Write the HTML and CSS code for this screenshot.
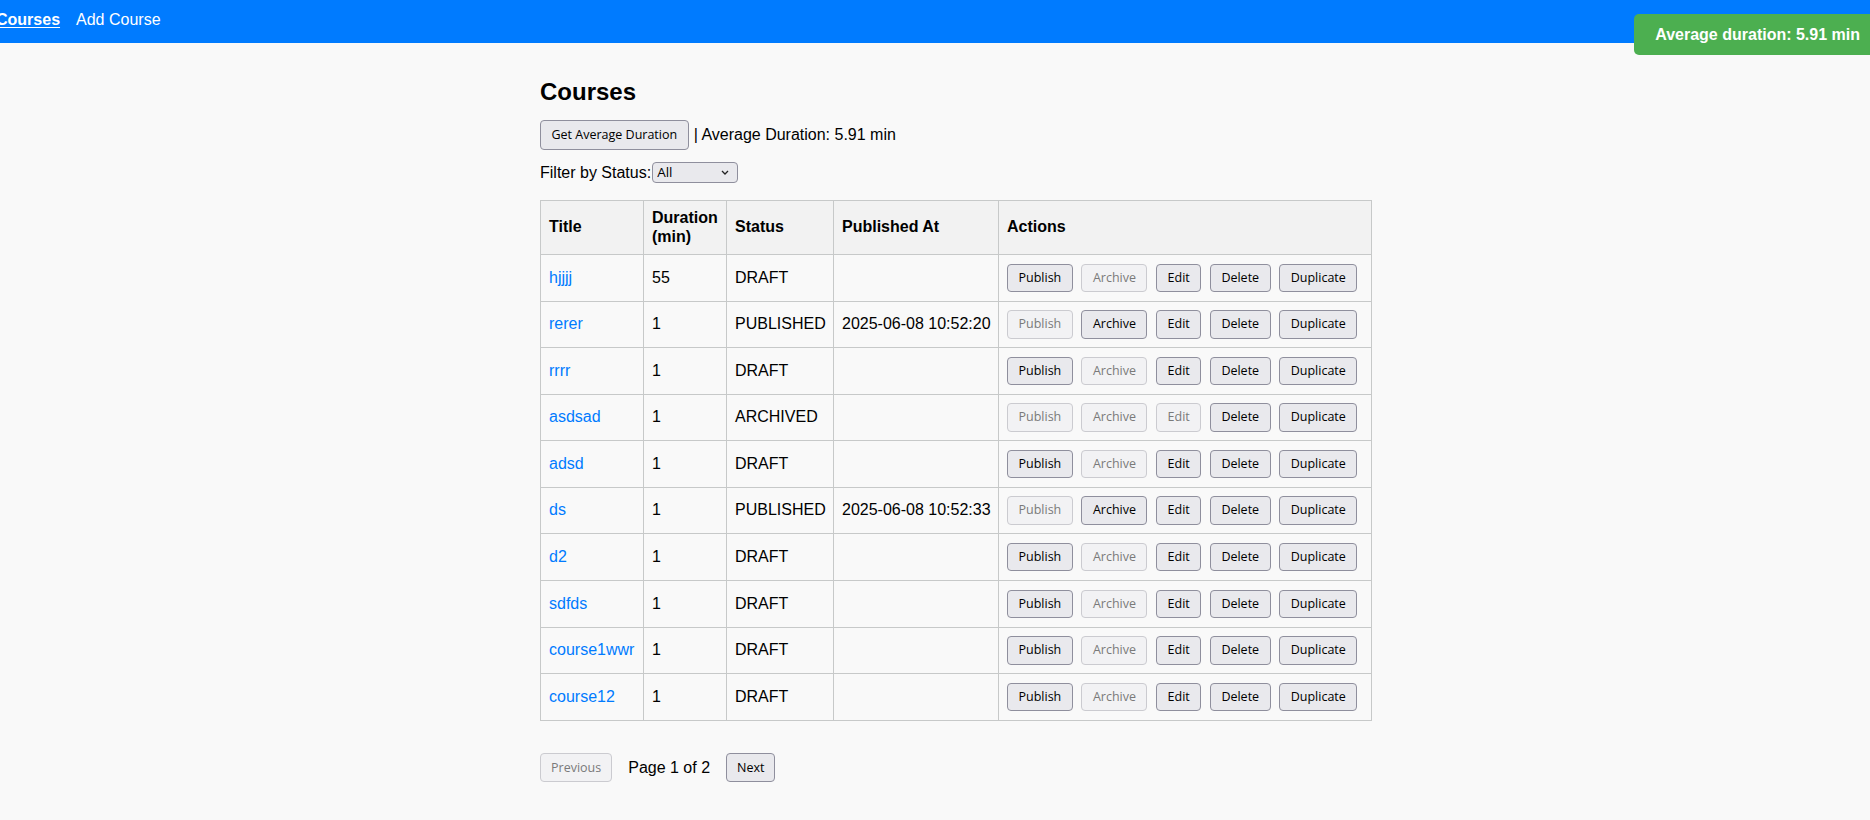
FILE: index.html
```html
<!DOCTYPE html>
<html lang="en">
<head>
<meta charset="utf-8">
<title>Courses</title>
<link rel="stylesheet" href="styles.css">
</head>
<body>
<nav class="navbar">
  <a class="nav-link active" href="#">Courses</a>
  <a class="nav-link" href="#">Add Course</a>
</nav>
<div class="toast">Average duration: 5.91 min</div>
<main class="container">
  <h2 class="title">Courses</h2>
  <div class="avg-row">
    <button class="btn btn-lg">Get Average Duration</button>
    <span class="avg-text">| Average Duration: 5.91 min</span>
  </div>
  <div class="filter-row">
    <label class="filter-label" for="status">Filter by Status:</label>
    <span class="select-wrap">
      <select id="status" class="select"><option>All</option><option>DRAFT</option><option>PUBLISHED</option><option>ARCHIVED</option></select>
      <svg class="chev" width="8" height="5" viewBox="0 0 8 5"><path d="M1 1 L4 4 L7 1" fill="none" stroke="#222" stroke-width="1.3"/></svg>
    </span>
  </div>
  <table class="table">
    <thead>
      <tr>
        <th class="c-title">Title</th>
        <th class="c-dur">Duration (min)</th>
        <th class="c-status">Status</th>
        <th class="c-pub">Published At</th>
        <th class="c-act">Actions</th>
      </tr>
    </thead>
    <tbody>
      <tr><td><a href="#">hjjjj</a></td><td>55</td><td>DRAFT</td><td></td>
        <td><div class="actions"><button class="btn">Publish</button><button class="btn" disabled>Archive</button><button class="btn">Edit</button><button class="btn">Delete</button><button class="btn">Duplicate</button></div></td></tr>
      <tr><td><a href="#">rerer</a></td><td>1</td><td>PUBLISHED</td><td>2025-06-08 10:52:20</td>
        <td><div class="actions"><button class="btn" disabled>Publish</button><button class="btn">Archive</button><button class="btn">Edit</button><button class="btn">Delete</button><button class="btn">Duplicate</button></div></td></tr>
      <tr><td><a href="#">rrrr</a></td><td>1</td><td>DRAFT</td><td></td>
        <td><div class="actions"><button class="btn">Publish</button><button class="btn" disabled>Archive</button><button class="btn">Edit</button><button class="btn">Delete</button><button class="btn">Duplicate</button></div></td></tr>
      <tr><td><a href="#">asdsad</a></td><td>1</td><td>ARCHIVED</td><td></td>
        <td><div class="actions"><button class="btn" disabled>Publish</button><button class="btn" disabled>Archive</button><button class="btn" disabled>Edit</button><button class="btn">Delete</button><button class="btn">Duplicate</button></div></td></tr>
      <tr><td><a href="#">adsd</a></td><td>1</td><td>DRAFT</td><td></td>
        <td><div class="actions"><button class="btn">Publish</button><button class="btn" disabled>Archive</button><button class="btn">Edit</button><button class="btn">Delete</button><button class="btn">Duplicate</button></div></td></tr>
      <tr><td><a href="#">ds</a></td><td>1</td><td>PUBLISHED</td><td>2025-06-08 10:52:33</td>
        <td><div class="actions"><button class="btn" disabled>Publish</button><button class="btn">Archive</button><button class="btn">Edit</button><button class="btn">Delete</button><button class="btn">Duplicate</button></div></td></tr>
      <tr><td><a href="#">d2</a></td><td>1</td><td>DRAFT</td><td></td>
        <td><div class="actions"><button class="btn">Publish</button><button class="btn" disabled>Archive</button><button class="btn">Edit</button><button class="btn">Delete</button><button class="btn">Duplicate</button></div></td></tr>
      <tr><td><a href="#">sdfds</a></td><td>1</td><td>DRAFT</td><td></td>
        <td><div class="actions"><button class="btn">Publish</button><button class="btn" disabled>Archive</button><button class="btn">Edit</button><button class="btn">Delete</button><button class="btn">Duplicate</button></div></td></tr>
      <tr><td><a href="#">course1wwr</a></td><td>1</td><td>DRAFT</td><td></td>
        <td><div class="actions"><button class="btn">Publish</button><button class="btn" disabled>Archive</button><button class="btn">Edit</button><button class="btn">Delete</button><button class="btn">Duplicate</button></div></td></tr>
      <tr><td><a href="#">course12</a></td><td>1</td><td>DRAFT</td><td></td>
        <td><div class="actions"><button class="btn">Publish</button><button class="btn" disabled>Archive</button><button class="btn">Edit</button><button class="btn">Delete</button><button class="btn">Duplicate</button></div></td></tr>
    </tbody>
  </table>
  <div class="pagination">
    <button class="btn btn-page" disabled>Previous</button>
    <span class="page-info">Page 1 of 2</span>
    <button class="btn btn-page">Next</button>
  </div>
</main>
</body>
</html>
```
FILE: styles.css
```css
html, body {
  margin: 0;
  padding: 0;
}
body {
  background: #f9f9f9;
  font-family: "Liberation Sans", Arial, sans-serif;
  font-size: 16px;
  color: #000;
  overflow: hidden;
}
.navbar {
  height: 43px;
  box-sizing: border-box;
  background: #007bff;
  padding: 10.5px 0 0 0;
  display: flex;
  gap: 16px;
}
.nav-link {
  color: #fff;
  text-decoration: none;
  line-height: 18.4px;
}
.nav-link.active {
  font-weight: bold;
  text-decoration: underline;
  text-underline-offset: 2px;
  margin-left: -4px;
}
.toast {
  position: fixed;
  top: 14px;
  right: -10px;
  height: 41px;
  line-height: 41px;
  padding: 0 20px 0 21px;
  background: #4caf50;
  color: #fff;
  font-weight: bold;
  border-radius: 5px;
}
.container {
  width: 790px;
  margin: 0 auto;
  padding-top: 34.5px;
}
.title {
  margin: 0;
  font-size: 24px;
  line-height: 27.6px;
  font-weight: bold;
}
.btn {
  font-family: "Open Sans", "Noto Sans", sans-serif;
  font-size: 12.5px;
  line-height: 16.4px;
  padding: 5px 10.5px;
  border: 1px solid #8f8f9d;
  border-radius: 4px;
  background: #e9e9ed;
  color: #000;
  margin: 0;
  white-space: nowrap;
}
.btn:disabled {
  background: #f2f2f4;
  border-color: #cbcbd0;
  color: #7a7a7a;
}
.btn-lg {
  padding: 6px 10.5px;
  line-height: 16px;
}
.avg-row {
  margin-top: 15px;
  display: flex;
  align-items: center;
  gap: 5px;
}
.filter-row {
  margin-top: 12px;
  display: flex;
  align-items: center;
}
.select-wrap {
  position: relative;
  display: inline-flex;
  margin-left: 1px;
}
.select {
  appearance: none;
  -webkit-appearance: none;
  width: 86px;
  height: 21px;
  box-sizing: border-box;
  border: 1px solid #8f8f9d;
  border-radius: 4px;
  background: #e9e9ed;
  font-family: "Open Sans", "Noto Sans", sans-serif;
  font-size: 13.5px;
  padding: 0 4px;
  color: #000;
  line-height: 19px;
}
.chev {
  position: absolute;
  right: 9px;
  top: 8px;
  pointer-events: none;
}
.table {
  margin-top: 17px;
  border-collapse: collapse;
  table-layout: fixed;
  width: 831px;
}
.table th, .table td {
  box-sizing: border-box;
  border: 1px solid #c7c9c9;
  padding: 8px;
  text-align: left;
  vertical-align: middle;
  line-height: 18.4px;
}
.table td {
  white-space: nowrap;
  padding-top: 8.6px;
  padding-bottom: 8.6px;
}
.table th {
  background: #f2f2f2;
  font-weight: bold;
}
.c-title { width: 103px; }
.c-dur { width: 83px; }
.c-status { width: 107px; }
.c-pub { width: 165px; }
.c-act { width: 373px; }
.table a {
  color: #007bff;
  text-decoration: none;
}
.actions {
  display: flex;
  gap: 8.6px;
}
.pagination {
  margin-top: 32.5px;
  display: flex;
  align-items: center;
  gap: 16px;
}
.btn-page {
  padding: 5.3px 10px;
}
```
